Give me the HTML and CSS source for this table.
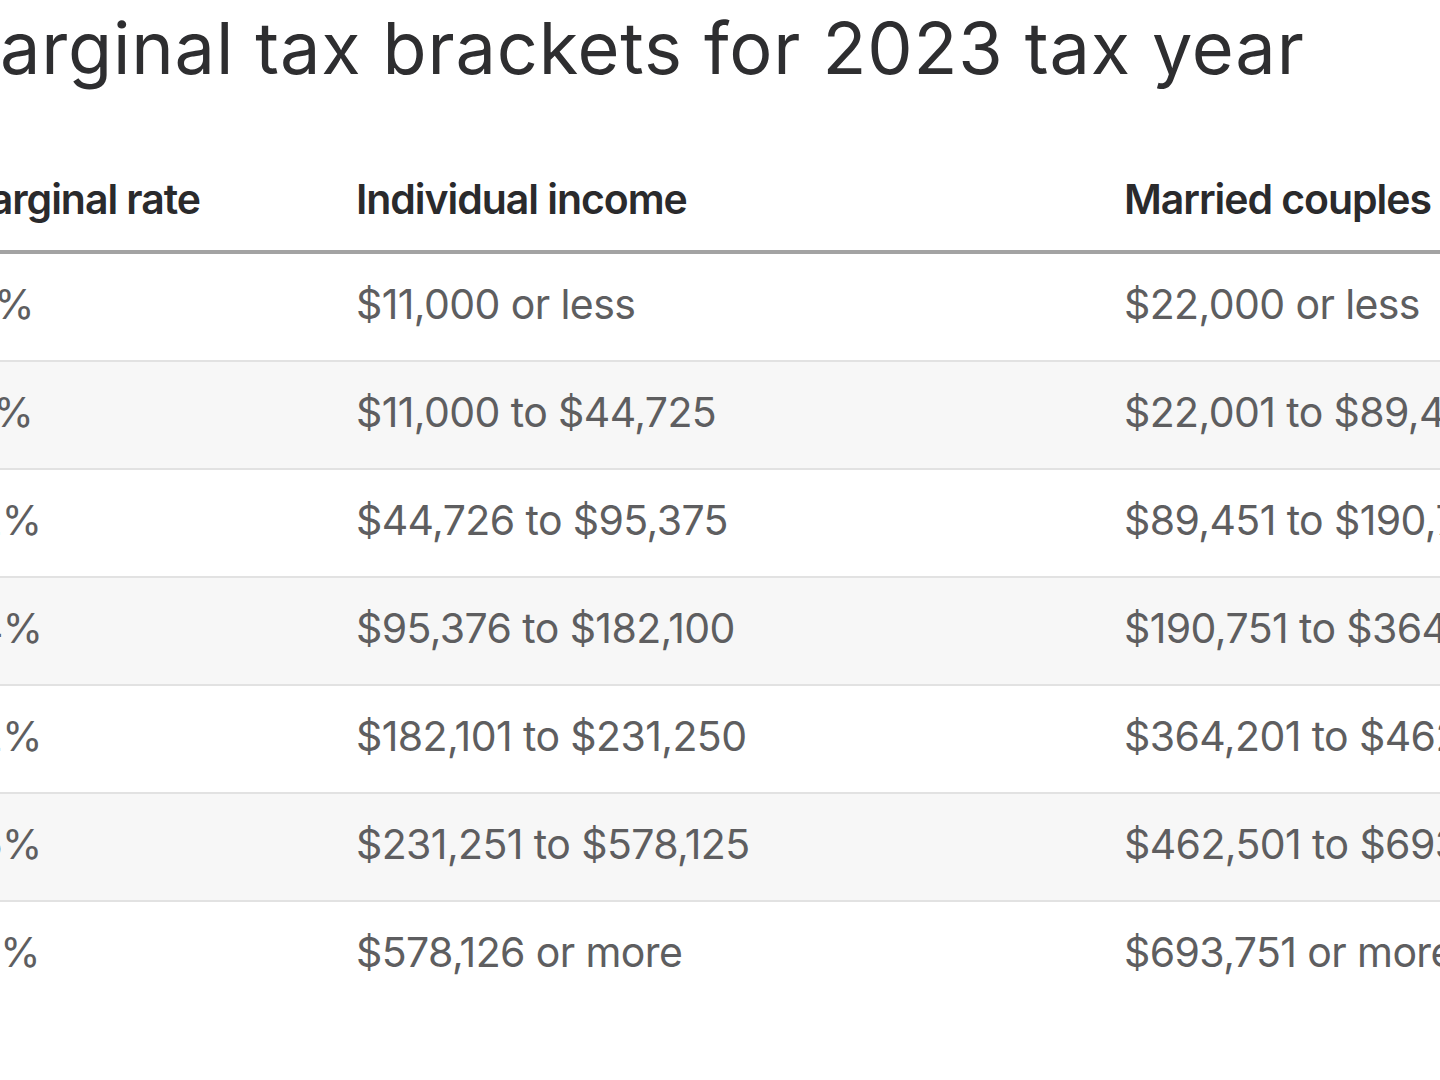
FILE: index.html
```html
<!DOCTYPE html>
<html lang="en">
<head>
<meta charset="utf-8">
<title>Marginal tax brackets for 2023 tax year</title>
<link rel="stylesheet" href="styles.css">
</head>
<body>
<div class="page">
  <h1 class="title">Marginal tax brackets for 2023 tax year</h1>
  <table class="brackets">
    <colgroup>
      <col class="c-rate">
      <col class="c-ind">
      <col class="c-mar">
    </colgroup>
    <thead>
      <tr>
        <th>Marginal rate</th>
        <th>Individual income</th>
        <th>Married couples filing jointly</th>
      </tr>
    </thead>
    <tbody>
      <tr><td>10%</td><td>$11,000 or less</td><td>$22,000 or less</td></tr>
      <tr><td>12%</td><td>$11,000 to $44,725</td><td>$22,001 to $89,450</td></tr>
      <tr><td>22%</td><td>$44,726 to $95,375</td><td>$89,451 to $190,750</td></tr>
      <tr><td>24%</td><td>$95,376 to $182,100</td><td>$190,751 to $364,200</td></tr>
      <tr><td>32%</td><td>$182,101 to $231,250</td><td>$364,201 to $462,500</td></tr>
      <tr><td>35%</td><td>$231,251 to $578,125</td><td>$462,501 to $693,750</td></tr>
      <tr><td>37%</td><td>$578,126 or more</td><td>$693,751 or more</td></tr>
    </tbody>
  </table>
</div>
</body>
</html>
```
FILE: styles.css
```css
html, body {
  margin: 0;
  padding: 0;
  background: #ffffff;
  overflow: hidden;
}
body {
  width: 1440px;
  height: 1080px;
  font-family: Inter, "Noto Sans", sans-serif;
}
.page {
  margin-left: -47px;
  width: 1720px;
}
.title {
  margin: 0 0 0 -19px;
  padding-top: 4px;
  font-size: 72px;
  line-height: 88px;
  font-weight: 400;
  color: #2e2e30;
  letter-spacing: 0.85px;
  white-space: nowrap;
}
.brackets {
  margin-top: 62px;
  border-collapse: collapse;
  table-layout: fixed;
  width: 1720px;
}
.c-rate { width: 403px; }
.c-ind { width: 768px; }
.c-mar { width: 549px; }
.brackets th {
  text-align: left;
  font-size: 41px;
  font-weight: 600;
  color: #2a2a2c;
  letter-spacing: -1.05px;
  padding: 20px 0 0 0;
  height: 76px;
  vertical-align: top;
  line-height: 50px;
  border-bottom: 4px solid #a3a3a3;
  white-space: nowrap;
}
.brackets td {
  text-align: left;
  font-size: 41px;
  font-weight: 400;
  color: #5e5e60;
  letter-spacing: -0.6px;
  padding: 0 0 6px 0;
  height: 100px;
  line-height: 50px;
  border-bottom: 2px solid #e2e2e2;
  white-space: nowrap;
}
.brackets tbody tr:nth-child(even) td {
  background: #f7f7f7;
}
.brackets tbody tr:last-child td {
  border-bottom: none;
}
```
